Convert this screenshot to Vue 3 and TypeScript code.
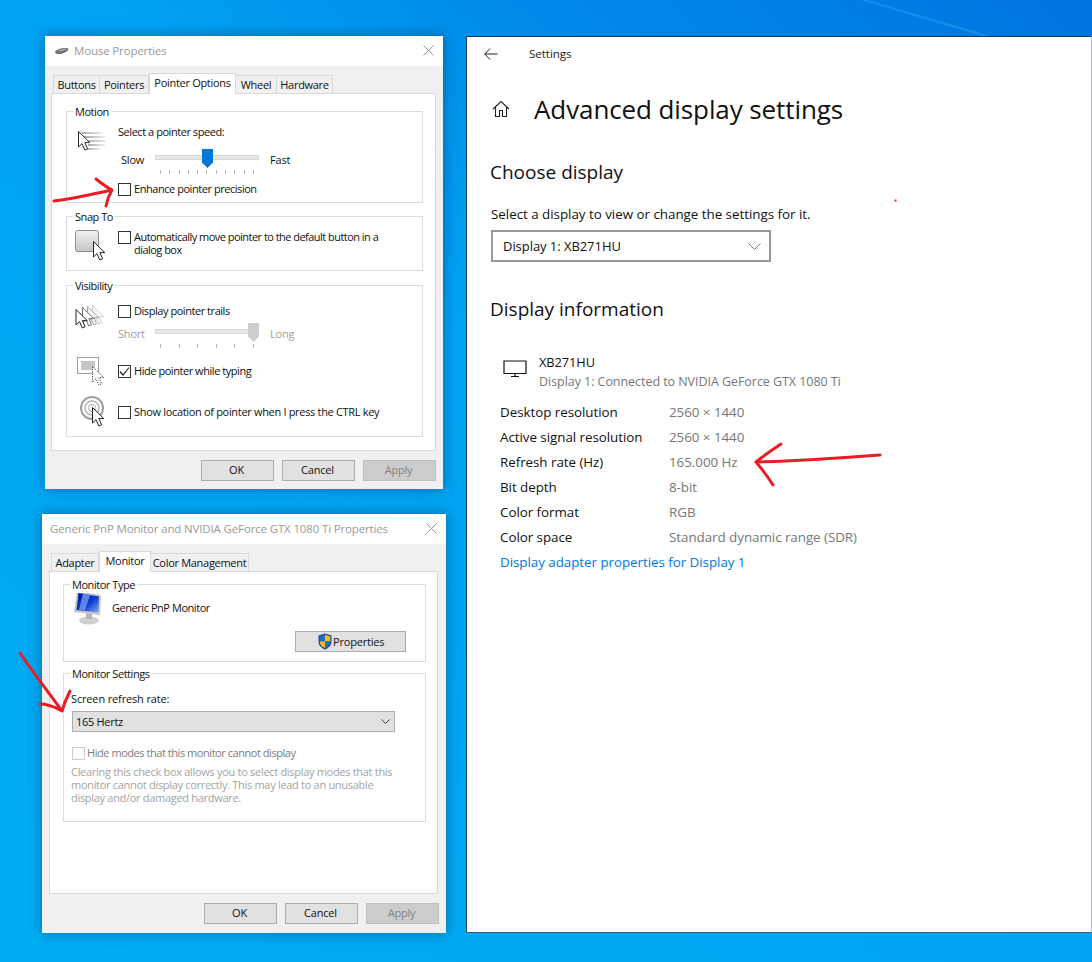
<script setup lang="ts">
const cursor = 'M0.5 0.5 V16 L4 12.6 L6.8 19 L9.6 17.8 L6.9 11.6 H11.8 Z'
const ticks1 = Array.from({ length: 11 }, (_, i) => i)
const ticks2 = Array.from({ length: 6 }, (_, i) => i)
const mouseTabs = ['Buttons', 'Pointers', 'Pointer Options', 'Wheel', 'Hardware']
const monitorTabs = ['Adapter', 'Monitor', 'Color Management']
const rows: [string, string][] = [
  ['Desktop resolution', '2560 × 1440'],
  ['Active signal resolution', '2560 × 1440'],
  ['Refresh rate (Hz)', '165.000 Hz'],
  ['Bit depth', '8-bit'],
  ['Color format', 'RGB'],
  ['Color space', 'Standard dynamic range (SDR)'],
]
</script>

<template>
  <div class="desktop">
    <svg class="beams" width="1092" height="962" viewBox="0 0 1092 962">
      <polygon points="861,0 868,0 994,37 985,37" fill="#35a8f6" opacity="0.4" />
    </svg>

    <!-- Mouse Properties -->
    <section class="win mouse">
      <header class="title">
        <svg class="mouse-ico" width="15" height="8" viewBox="0 0 15 8">
          <path d="M1 5 C3 1.5 9 0.5 13 1 C15 1.5 14.5 3.5 12 5 C8 7.5 1 8 1 5Z" fill="#6f7478" />
          <path d="M4 3.6 L11 1.6 L13 2.2 L6 4.6Z" fill="#a9afb3" />
        </svg>
        <span class="title-text">Mouse Properties</span>
        <svg class="close" width="11" height="11" viewBox="0 0 11 11"><path d="M0.5 0.5 L10.5 10.5 M10.5 0.5 L0.5 10.5" stroke="#9a9a9a" fill="none" /></svg>
      </header>
      <div class="body">
        <nav class="tabs tabs-mouse">
          <span v-for="t in mouseTabs" :key="t" class="tab" :class="{ active: t === 'Pointer Options' }">{{ t }}</span>
        </nav>
        <div class="pane">
          <fieldset class="grp g-motion">
            <span class="legend">Motion</span>
            <div class="icons">
              <svg width="30" height="24" viewBox="0 0 30 24" class="i-motion">
                <defs>
                  <linearGradient id="fade" x1="0" y1="0" x2="1" y2="0"><stop offset="0" stop-color="#a8a8a8" /><stop offset="1" stop-color="#eeeeee" /></linearGradient>
                </defs>
                <rect x="4" y="1" width="20" height="2" fill="url(#fade)" />
                <rect x="6" y="5" width="21" height="2" fill="url(#fade)" />
                <rect x="8" y="9" width="20" height="2" fill="url(#fade)" />
                <rect x="10" y="13" width="17" height="2" fill="url(#fade)" />
                <rect x="8" y="17" width="14" height="2" fill="url(#fade)" />
                <path :d="cursor" fill="#fff" stroke="#2a2a2a" />
              </svg>
            </div>
            <div class="content">
              <div class="line">Select a pointer speed:</div>
              <div class="slider-row r-speed">
                <span class="s-left">Slow</span>
                <div class="slider">
                  <div class="track"></div>
                  <svg class="thumb t-speed" width="11" height="19" viewBox="0 0 11 19"><path d="M0 0H11V13.5L5.5 19L0 13.5Z" fill="#0078d7" /></svg>
                  <div class="ticks"><i v-for="n in ticks1" :key="n"></i></div>
                </div>
                <span class="s-right">Fast</span>
              </div>
              <label class="check r-enh"><i class="box"></i><span>Enhance pointer precision</span></label>
            </div>
          </fieldset>

          <fieldset class="grp g-snap">
            <span class="legend">Snap To</span>
            <div class="icons">
              <svg width="32" height="32" viewBox="0 0 32 32" class="i-snap">
                <defs><linearGradient id="btn" x1="0" y1="0" x2="0" y2="1"><stop offset="0" stop-color="#f2f2f2" /><stop offset="1" stop-color="#c4c4c4" /></linearGradient></defs>
                <rect x="0.5" y="0.5" width="23" height="21" rx="2" fill="url(#btn)" stroke="#8f8f8f" />
                <path :d="cursor" transform="translate(18 11)" fill="#fff" stroke="#222" />
              </svg>
            </div>
            <div class="content">
              <label class="check two"><i class="box"></i><span>Automatically move pointer to the default button in a<br />dialog box</span></label>
            </div>
          </fieldset>

          <fieldset class="grp g-vis">
            <span class="legend">Visibility</span>
            <div class="icons">
              <svg width="33" height="24" viewBox="0 0 33 24" class="i-trails">
                <path :d="cursor" transform="translate(17 0)" fill="#f4f4f4" stroke="#d4d4d4" />
                <path :d="cursor" transform="translate(12 1)" fill="#f4f4f4" stroke="#a8a8a8" />
                <path :d="cursor" transform="translate(7 2)" fill="#fff" stroke="#707070" />
                <path :d="cursor" transform="translate(0.5 4)" fill="#fff" stroke="#222" />
              </svg>
              <svg width="28" height="28" viewBox="0 0 28 28" class="i-hide">
                <rect x="0.5" y="0.5" width="21" height="16" fill="#fff" stroke="#9e9e9e" />
                <rect x="4" y="4" width="14" height="9" fill="#c6c6c6" />
                <path :d="cursor" transform="translate(15 9)" fill="#fff" stroke="#444" stroke-dasharray="1.2 1.2" />
              </svg>
              <svg width="28" height="32" viewBox="0 0 28 32" class="i-loc">
                <circle cx="12" cy="13" r="11" fill="#fff" stroke="#9f9f9f" stroke-width="2" />
                <circle cx="12" cy="13" r="7" fill="none" stroke="#b5b5b5" stroke-width="1.5" />
                <circle cx="12" cy="13" r="3.5" fill="none" stroke="#c5c5c5" stroke-width="1.5" />
                <path :d="cursor" transform="translate(12 12)" fill="#fff" stroke="#222" />
              </svg>
            </div>
            <div class="content">
              <label class="check"><i class="box"></i><span>Display pointer trails</span></label>
              <div class="slider-row r-trail dim">
                <span class="s-left s-short">Short</span>
                <div class="slider">
                  <div class="track tall"></div>
                  <svg class="thumb t-trail" width="11" height="19" viewBox="0 0 11 19"><path d="M0 0H11V13.5L5.5 19L0 13.5Z" fill="#cdcdcd" /></svg>
                  <div class="ticks"><i v-for="n in ticks2" :key="n"></i></div>
                </div>
                <span class="s-right">Long</span>
              </div>
              <label class="check r-hide">
                <i class="box">
                  <svg width="11" height="11" viewBox="0 0 11 11"><path d="M1 5.5 L4 9 L10 1.5" fill="none" stroke="#222" stroke-width="1.2" /></svg>
                </i>
                <span>Hide pointer while typing</span>
              </label>
              <label class="check r-show"><i class="box"></i><span>Show location of pointer when I press the CTRL key</span></label>
            </div>
          </fieldset>
        </div>
        <footer class="foot">
          <button class="btn">OK</button>
          <button class="btn">Cancel</button>
          <button class="btn off">Apply</button>
        </footer>
      </div>
    </section>

    <!-- Monitor properties -->
    <section class="win monitor">
      <header class="title">
        <span class="title-text">Generic PnP Monitor and NVIDIA GeForce GTX 1080 Ti Properties</span>
        <svg class="close" width="11" height="11" viewBox="0 0 11 11"><path d="M0.5 0.5 L10.5 10.5 M10.5 0.5 L0.5 10.5" stroke="#9a9a9a" fill="none" /></svg>
      </header>
      <div class="body">
        <nav class="tabs tabs-mon">
          <span v-for="t in monitorTabs" :key="t" class="tab" :class="{ active: t === 'Monitor' }">{{ t }}</span>
        </nav>
        <div class="pane pane-mon">
          <fieldset class="grp g-type">
            <span class="legend">Monitor Type</span>
            <div class="type-row">
              <svg width="30" height="36" viewBox="0 0 30 36">
                <defs><linearGradient id="scr" x1="0" y1="0" x2="1" y2="1"><stop offset="0" stop-color="#001a9c" /><stop offset="0.55" stop-color="#0a3cd0" /><stop offset="1" stop-color="#8aa8ee" /></linearGradient></defs>
                <ellipse cx="16" cy="30.5" rx="10" ry="4" fill="#cfcfcf" />
                <rect x="13" y="23" width="6" height="6" fill="#b5b5b5" />
                <path d="M4 1 L28 5 L27 25 L1 22Z" fill="#c4c6ca" />
                <path d="M5.5 3 L26 6.5 L25.5 22.5 L3.5 20Z" fill="url(#scr)" />
                <path d="M10 3.6 L17 5 L12 20.5 L6 20Z" fill="#7fa0f0" opacity="0.75" />
              </svg>
              <span class="type-name">Generic PnP Monitor</span>
            </div>
            <div class="prop-row">
              <button class="btn prop">
                <svg width="14" height="17" viewBox="0 0 14 17">
                  <path d="M7 0.5 L13.5 2.5 V8.5 C13.5 12.5 10.5 15 7 16.5 C3.5 15 0.5 12.5 0.5 8.5 V2.5Z" fill="#1f4f8f" />
                  <path d="M7 1.8 V8.5 H1.7 V3.4Z" fill="#1e6fc8" />
                  <path d="M7 1.8 L12.3 3.4 V8.5 H7Z" fill="#f6bd16" />
                  <path d="M1.7 8.5 H7 V15 C4 13.8 1.9 11.6 1.7 8.5Z" fill="#f6bd16" />
                  <path d="M7 8.5 H12.3 C12.1 11.6 10 13.8 7 15Z" fill="#1e6fc8" />
                </svg>
                <span>Properties</span>
              </button>
            </div>
          </fieldset>
          <fieldset class="grp g-set">
            <span class="legend">Monitor Settings</span>
            <div class="set-label">Screen refresh rate:</div>
            <div class="combo">
              <span>165 Hertz</span>
              <svg width="9" height="6" viewBox="0 0 9 6"><path d="M0.5 0.5 L4.5 4.5 L8.5 0.5" fill="none" stroke="#444" stroke-width="1" /></svg>
            </div>
            <label class="check r-modes"><i class="box faint"></i><span>Hide modes that this monitor cannot display</span></label>
            <p class="note">Clearing this check box allows you to select display modes that this<br />monitor cannot display correctly. This may lead to an unusable<br />display and/or damaged hardware.</p>
          </fieldset>
        </div>
        <footer class="foot">
          <button class="btn">OK</button>
          <button class="btn">Cancel</button>
          <button class="btn off">Apply</button>
        </footer>
      </div>
    </section>

    <!-- Settings -->
    <section class="settings">
      <header class="s-top">
        <svg width="14" height="12" viewBox="0 0 14 12"><path d="M6 0.5 L0.8 6 L6 11.5 M0.8 6 H13.5" fill="none" stroke="#222" stroke-width="1" /></svg>
        <span class="s-app">Settings</span>
      </header>
      <div class="s-head">
        <svg width="18" height="18" viewBox="0 0 18 18"><path d="M1 9 L9 1.5 L17 9 M3.5 7 V16.5 H7.5 V10.5 H10.5 V16.5 H14.5 V7" fill="none" stroke="#222" stroke-width="1.1" /></svg>
        <h1>Advanced display settings</h1>
      </div>
      <h2 class="h-choose">Choose display</h2>
      <p class="s-sel">Select a display to view or change the settings for it.</p>
      <div class="s-combo">
        <span>Display 1: XB271HU</span>
        <svg width="13" height="7" viewBox="0 0 13 7"><path d="M0.5 0.5 L6.5 6.5 L12.5 0.5" fill="none" stroke="#777" stroke-width="1" /></svg>
      </div>
      <h2 class="h-info">Display information</h2>
      <div class="d-head">
        <svg width="24" height="18" viewBox="0 0 24 18"><path d="M1 1 H23 V13.5 H1Z M8 16.5 H16 M12 13.5 V16.5" fill="none" stroke="#111" stroke-width="1.2" /></svg>
        <div>
          <div class="d-name">XB271HU</div>
          <div class="d-sub">Display 1: Connected to NVIDIA GeForce GTX 1080 Ti</div>
        </div>
      </div>
      <dl class="d-list">
        <div v-for="r in rows" :key="r[0]" class="d-row">
          <dt>{{ r[0] }}</dt>
          <dd>{{ r[1] }}</dd>
        </div>
      </dl>
      <a class="d-link">Display adapter properties for Display 1</a>
    </section>

    <!-- Hand drawn annotations -->
    <svg class="ink" width="1092" height="962" viewBox="0 0 1092 962">
      <g fill="none" stroke="#ed1c24" stroke-width="3" stroke-linecap="round" stroke-linejoin="round">
        <path d="M54 201 C72 199 92 194 112 190 C106 187 101 183 96 179 M112 190 C109 195 107 200 106 206" />
        <path d="M20 653 C34 674 50 694 62 711 C64 704 67 697 70 691 M62 711 C56 708 50 704 40 704" />
        <path d="M880 455 C840 458 795 461 756 462 C763 456 772 450 781 444 M756 462 C762 469 768 477 773 485" />
      </g>
      <rect x="894.5" y="199.5" width="2" height="2" fill="#ed1c24" />
    </svg>
  </div>
</template>

<style>
html, body { margin: 0; padding: 0; }
</style>

<style scoped>
.desktop {
  position: relative;
  width: 1092px;
  height: 962px;
  overflow: hidden;
  font-family: "Open Sans", "Noto Sans", sans-serif;
  background: linear-gradient(to bottom left, #0074e0 0%, #0088e8 25%, #00a2f2 45%, #00adf4 100%);
}
.beams { position: absolute; left: 0; top: 0; }
.ink { position: absolute; left: 0; top: 0; pointer-events: none; }

.win {
  position: absolute;
  display: flex;
  flex-direction: column;
  background: #fff;
  box-shadow: 0 0 12px rgba(0, 30, 70, 0.45);
  color: #111;
  font-size: 11px;
  letter-spacing: -0.45px;
  box-sizing: border-box;
}
.mouse { left: 45px; top: 36px; width: 398px; height: 453px; }
.monitor { left: 42px; top: 514px; width: 404px; height: 419px; }

.title {
  height: 30px;
  flex: none;
  display: flex;
  align-items: center;
  padding: 0 9px 1px 8px;
  box-sizing: border-box;
  color: #9a9a9a;
  font-size: 11.5px;
}
.mouse .title { padding-left: 9px; }
.mouse-ico { margin-right: 5px; }
.title-text { flex: 1; letter-spacing: -0.15px; padding-bottom: 1px; }

.body {
  flex: 1;
  display: flex;
  flex-direction: column;
  background: #f0f0f0;
  padding: 7px 7px 8px 6px;
  min-height: 0;
}
.tabs { display: flex; height: 20px; margin-left: 2px; position: relative; z-index: 1; align-items: flex-end; }
.tab {
  height: 18px;
  line-height: 17px;
  text-align: center;
  border: 1px solid #d9d9d9;
  border-bottom: 0;
  border-left-width: 0;
  box-sizing: border-box;
  white-space: nowrap;
  letter-spacing: -0.3px;
}
.tab:first-child { border-left-width: 1px; }
.tab.active {
  height: 21px;
  margin-bottom: -1px;
  background: #fff;
  line-height: 17px;
  border-left-width: 1px;
}
.tabs-mouse .tab:nth-child(1) { width: 47px; }
.tabs-mouse .tab:nth-child(2) { width: 49px; }
.tabs-mouse .tab:nth-child(3) { width: 87px; }
.tabs-mouse .tab:nth-child(4) { width: 41px; }
.tabs-mouse .tab:nth-child(5) { width: 56px; }
.tabs-mon { margin-left: 3px; }
.tabs-mon .tab:nth-child(1) { width: 48px; }
.tabs-mon .tab:nth-child(2) { width: 52px; }
.tabs-mon .tab:nth-child(3) { width: 98px; }
.pane {
  width: 385px;
  height: 358px;
  flex: none;
  box-sizing: border-box;
  background: #fff;
  border: 1px solid #d9d9d9;
  padding: 17px 0 0 14px;
  display: flex;
  flex-direction: column;
}
.pane-mon { width: 389px; height: 323px; margin-left: 1px; padding: 12px 0 0 13px; }

.grp {
  position: relative;
  margin: 0;
  padding: 0;
  border: 1px solid #dcdcdc;
  box-sizing: border-box;
  width: 357px;
  display: flex;
}
.legend {
  position: absolute;
  left: 6px;
  top: -8px;
  background: #fff;
  padding: 0 2px;
  line-height: 16px;
}
.g-motion { height: 92px; }
.g-snap { height: 55px; margin-top: 13px; }
.g-vis { height: 152px; margin-top: 14px; }
.g-type { height: 78px; width: 363px; flex-direction: column; }
.g-set { height: 149px; width: 363px; margin-top: 11px; flex-direction: column; }

.icons { width: 51px; flex: none; display: flex; flex-direction: column; align-items: flex-start; }
.i-motion { margin: 19px 0 0 11px; }
.i-snap { margin: 13px 0 0 8px; }
.i-trails { margin: 19px 0 0 8px; }
.i-hide { margin: 28px 0 0 10px; }
.i-loc { margin: 10px 0 0 13px; }

.content { flex: 1; display: flex; flex-direction: column; }
.line { height: 16px; line-height: 16px; margin-top: 12px; }
.check { display: flex; align-items: center; height: 16px; line-height: 16px; }
.box {
  width: 13px;
  height: 13px;
  flex: none;
  box-sizing: border-box;
  border: 1px solid #333;
  margin-right: 3px;
  background: #fff;
  display: flex;
  align-items: center;
  justify-content: center;
}
.box.faint { border-color: #ccc; }
.r-enh { margin-top: 8px; }
.g-vis .check:first-child { margin-top: 17px; }
.two { height: auto; align-items: flex-start; margin-top: 13px; line-height: 13px; letter-spacing: -0.53px; }
.two .box { margin-top: 1px; }
.r-hide { margin-top: 16px; }
.r-show { margin-top: 25px; letter-spacing: -0.32px; }

.slider-row { display: flex; align-items: flex-start; height: 24px; letter-spacing: -0.2px; }
.r-speed { margin-top: 9px; }
.r-trail { margin-top: 4px; }
.dim { color: #a0a0a0; }
.s-left { width: 34px; padding-left: 3px; margin-top: 3px; line-height: 16px; }
.s-short { padding-left: 0; width: 37px; }
.s-right { margin-left: 11px; margin-top: 3px; line-height: 16px; }
.slider { width: 104px; height: 24px; position: relative; }
.track {
  margin-top: 6px;
  height: 3px;
  background: #e7e7e7;
  border: 1px solid #d6d6d6;
}
.track.tall { height: 3px; }
.thumb { position: absolute; top: 0; }
.t-speed { left: 47px; }
.t-trail { left: 93px; }
.ticks {
  display: flex;
  justify-content: space-between;
  padding: 0 5px;
  margin-top: 10px;
}
.ticks i { width: 1px; height: 4px; background: #b5b5b5; }

.foot { display: flex; justify-content: flex-end; gap: 8px; margin-top: 9px; }
.btn {
  width: 73px;
  height: 21px;
  padding: 0 2px 2px 0;
  background: #e1e1e1;
  border: 1px solid #adadad;
  font: inherit;
  letter-spacing: -0.2px;
  color: #111;
  box-sizing: border-box;
  line-height: 15px;
}
.btn.off { background: #cccccc; border-color: #bfbfbf; color: #838383; }

.type-row { display: flex; align-items: center; padding: 4px 0 0 9px; height: 37px; box-sizing: content-box; }
.type-name { margin-left: 9px; margin-top: -1px; }
.prop-row { display: flex; justify-content: flex-end; padding-right: 19px; margin-top: 5px; }
.prop {
  width: 111px;
  display: flex;
  align-items: center;
  padding: 0 0 0 22px;
  gap: 1px;
}
.prop span { margin-top: -1px; }
.set-label { margin: 17px 0 0 7px; height: 16px; line-height: 16px; letter-spacing: -0.15px; }
.combo {
  margin: 4px 0 0 8px;
  width: 323px;
  height: 21px;
  box-sizing: border-box;
  border: 1px solid #adadad;
  background: #e1e1e1;
  display: flex;
  align-items: center;
  justify-content: space-between;
  padding: 0 4px 0 3px;
  letter-spacing: -0.3px;
}
.r-modes { margin: 13px 0 0 8px; color: #7c7c7c; }
.r-modes .box { margin-right: 2px; }
.note { margin: 4px 0 0 7px; line-height: 13px; color: #a3a3a3; letter-spacing: -0.3px; }

.settings {
  position: absolute;
  left: 466px;
  top: 36px;
  width: 626px;
  height: 897px;
  box-sizing: border-box;
  background: #fff;
  border: 1px solid #1c3a55;
  border-right: 1px solid #b3bcd6;
  border-bottom-color: #3a5a78;
  color: #111;
  font-size: 13.4px;
  letter-spacing: -0.05px;
}
.s-top { display: flex; align-items: center; height: 33px; padding-left: 17px; }
.s-app { margin-left: 31px; font-size: 11.6px; color: #222; }
.s-head { display: flex; align-items: center; margin-top: 19px; padding-left: 25px; height: 40px; }
.s-head h1 { margin: 0 0 0 24px; font-size: 26px; font-weight: 400; letter-spacing: -0.1px; color: #111; white-space: nowrap; }
h2 { margin: 0; font-size: 19px; font-weight: 400; padding-left: 23px; line-height: 26px; letter-spacing: 0; color: #111; }
.h-choose { margin-top: 30px; }
.s-sel { margin: 20px 0 0 24px; line-height: 18px; letter-spacing: -0.03px; }
.s-combo {
  margin: 7px 0 0 24px;
  width: 280px;
  height: 32px;
  box-sizing: border-box;
  border: 2px solid #999;
  display: flex;
  align-items: center;
  justify-content: space-between;
  padding: 0 8px 0 10px;
  font-size: 13px;
}
.h-info { margin-top: 34px; }
.d-head { display: flex; margin-top: 30px; padding-left: 36px; gap: 12px; align-items: flex-start; }
.d-head svg { margin-top: 8px; }
.d-name { line-height: 20px; font-size: 12.8px; }
.d-sub { line-height: 19px; color: #767676; font-size: 12.5px; }
.d-list { margin: 8px 0 0 33px; }
.d-row { display: flex; height: 25px; align-items: center; }
dt { width: 169px; }
dd { margin: 0; color: #767676; }
.d-link { display: block; margin: 1px 0 0 33px; line-height: 25px; color: #0078d7; }
</style>
